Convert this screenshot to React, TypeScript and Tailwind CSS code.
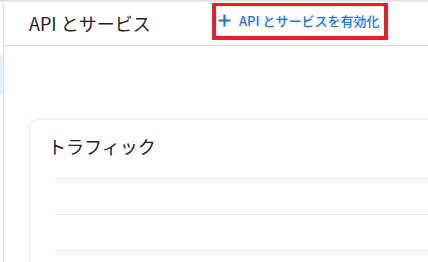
import React from "react";

export default function App() {
  const font = { fontFamily: '"Noto Sans CJK JP", "Noto Sans", Roboto, sans-serif' };
  return (
    <div className="w-[428px] h-[262px] bg-white flex overflow-hidden relative" style={font}>
      <div className="absolute top-0 left-0 right-0 h-[3px] bg-gradient-to-b from-[#d9d9d9] to-white" />
      <div className="w-[3px] shrink-0 flex flex-col">
        <div className="h-[55px]" />
        <div className="h-[40px] bg-[#e8f0fe]" />
      </div>
      <div className="w-[1px] shrink-0 bg-[#e0e0e0]" />
      <div className="flex-1 flex flex-col min-w-0">
        <div className="h-[46px] shrink-0 border-b border-[#dadce0] flex items-center pl-[25px]">
          <div className="text-[18px] text-[#202124] leading-none w-[183px] pt-[1px]">API とサービス</div>
          <div className="h-[38px] mt-[-4px] border-[4px] border-[#ed1c24] flex items-center pl-[2px] w-[176px]">
            <svg width="13" height="13" viewBox="0 0 13 13" className="shrink-0">
              <path d="M6.5 0.5v12M0.5 6.5h12" stroke="#1a73e8" strokeWidth="2.2" />
            </svg>
            <span className="ml-[8px] text-[13px] font-medium text-[#1a73e8] whitespace-nowrap leading-none">
              API とサービスを有効化
            </span>
          </div>
        </div>
        <div className="pt-[73px] pl-[25px]">
          <div className="w-[460px] h-[200px] rounded-[8px] border border-[#eeeeee] shadow-[0_0_2px_rgba(0,0,0,0.06)] pt-[14px] pl-[18px]">
            <div className="text-[18px] text-[#202124] leading-[24px]">トラフィック</div>
            <div className="ml-[7px] mt-[20px] flex flex-col">
              <div className="h-[1px] bg-[#e8e8e8]" />
              <div className="h-[35px]" />
              <div className="h-[1px] bg-[#e8e8e8]" />
              <div className="h-[35px]" />
              <div className="h-[1px] bg-[#e8e8e8]" />
            </div>
          </div>
        </div>
      </div>
    </div>
  );
}
